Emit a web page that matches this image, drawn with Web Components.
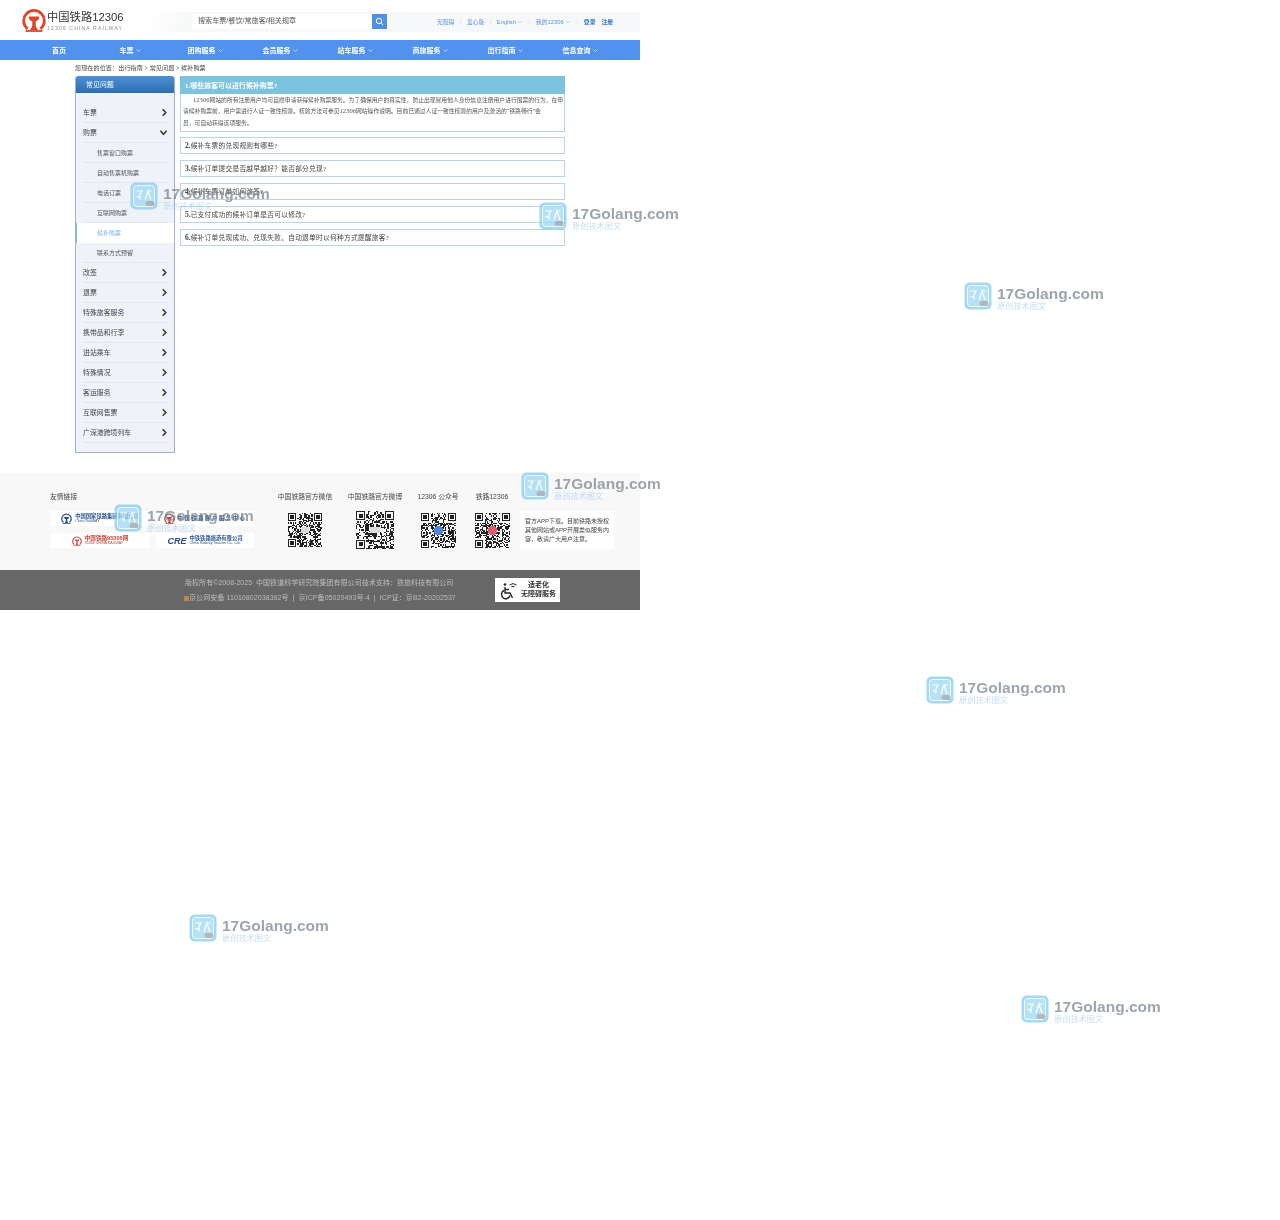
<!DOCTYPE html>
<html lang="zh-CN">
<head>
<meta charset="utf-8">
<title>候补购票 - 常见问题</title>
<style>
    html, body { margin: 0; padding: 0; background: #fff; }
    body { width: 1280px; height: 1220px; overflow: hidden; position: relative;
           font-family: "Liberation Sans", "Noto Sans CJK SC", sans-serif; }
    .page { width: 640px; filter: blur(.3px); }
</style>
</head>
<body>
<div class="page">
    <site-header></site-header>
    <site-nav></site-nav>
    <faq-page>
        <span slot="crumb">您现在的位置：出行指南 &gt; 常见问题 &gt; 候补购票</span>
        <faq-sidebar slot="side">
            <side-item>车票</side-item>
            <side-item open>购票</side-item>
            <side-item sub>售票窗口购票</side-item>
            <side-item sub>自动售票机购票</side-item>
            <side-item sub>电话订票</side-item>
            <side-item sub>互联网购票</side-item>
            <side-item sub active>候补购票</side-item>
            <side-item sub>联系方式预留</side-item>
            <side-item>改签</side-item>
            <side-item>退票</side-item>
            <side-item>特殊旅客服务</side-item>
            <side-item>携带品和行李</side-item>
            <side-item>进站乘车</side-item>
            <side-item>特殊情况</side-item>
            <side-item>客运服务</side-item>
            <side-item>互联网售票</side-item>
            <side-item>广深港跨境列车</side-item>
        </faq-sidebar>
        <faq-open slot="main" title-text="1.哪些旅客可以进行候补购票?"><span>12306</span>网站的所有注册用户均可自愿申请获得候补购票服务。为了确保用户的真实性，防止出现冒用他人身份信息注册用户进行囤票的行为，在申<br>请候补购票前，用户需进行人证一致性核验。核验方法可参见<span>12306</span>网站操作说明。目前已通过人证一致性核验的用户及激活的“铁路畅行”会<br>员，可自动获得该项服务。</faq-open>
        <faq-item slot="main"><b>2.</b>候补车票的兑现规则有哪些?</faq-item>
        <faq-item slot="main"><b>3.</b>候补订单提交是否越早越好？能否部分兑现?</faq-item>
        <faq-item slot="main"><b>4.</b>候补车票订单如何改签?</faq-item>
        <faq-item slot="main"><b>5.</b>已支付成功的候补订单是否可以修改?</faq-item>
        <faq-item slot="main"><b>6.</b>候补订单兑现成功、兑现失败、自动退单时以何种方式提醒旅客?</faq-item>
    </faq-page>
    <site-footer></site-footer>
</div>

<wm-mark x="130" y="182"></wm-mark>
<wm-mark x="539" y="202"></wm-mark>
<wm-mark x="964" y="282"></wm-mark>
<wm-mark x="521" y="472"></wm-mark>
<wm-mark x="114" y="504"></wm-mark>
<wm-mark x="926" y="676"></wm-mark>
<wm-mark x="189" y="914"></wm-mark>
<wm-mark x="1021" y="995"></wm-mark>

<script>
const CJK = '"Liberation Sans", "Noto Sans CJK SC", sans-serif';
const SERIF = '"Liberation Serif", "Noto Sans CJK SC", serif';

// chevron used all over the nav and the header links
function chev(size, color) {
    return `<svg width="${size}" height="${size}" viewBox="0 0 10 10" fill="none" stroke="${color}" stroke-width="1.2"><path d="M2 3.500 5 6.500 8 3.500"/></svg>`;
}

// the round red railway logo, open ring + rail head on flared feet
function railLogo(size, color) {
    return `<svg width="${size}" height="${size}" viewBox="0 0 24 24" fill="none">
        <path d="M5.600 20.800A10.300 10.300 0 1 1 18.400 20.800" stroke="${color}" stroke-width="2.800"/>
        <path d="M3.500 23h17" stroke="${color}" stroke-width="1.800"/>
        <path d="M6.800 8.500h10.400c.4 2.800-1.600 4.400-3.500 4.600v3.600c0 2 1 3.800 2.400 5.300H7.900c1.400-1.500 2.400-3.300 2.400-5.300v-3.600c-1.900-.2-3.900-1.800-3.500-4.600z" fill="${color}"/>
    </svg>`;
}

class SiteHeader extends HTMLElement {
    constructor() {
        super();
        this.attachShadow({ mode: 'open' });
        this.shadowRoot.innerHTML = `
        <style>
            :host { display: flex; align-items: center; height: 40px; box-sizing: border-box; padding-left: 22px; font-family: ${CJK}; }
            .logo { display: flex; align-items: center; gap: 1px; width: 128px; flex: none; }
            .logo > div { margin-top: 3px; }
            .logo b { display: block; font-weight: 400; font-size: 11.300px; line-height: 13px; color: #333; white-space: nowrap; }
            .logo i { display: block; font-style: normal; font-size: 5.200px; line-height: 8px; letter-spacing: 1.080px; color: #8a8a8a; white-space: nowrap; }
            .band { flex: 1; height: 20px; display: flex; align-items: center; padding-left: 42px; margin-top: 3px;
                    background: linear-gradient(105deg, rgba(247,248,249,0) 0, #f7f8f9 38px); }
            .search { width: 180px; height: 15px; box-sizing: border-box; background: #fff; color: #555; font-size: 7.100px; line-height: 15px; padding-left: 6px; white-space: nowrap; }
            .btn { width: 15px; height: 15px; background: #4f8fe8; display: flex; align-items: center; justify-content: center; }
            .links { display: flex; align-items: center; margin-left: 50px; font-size: 5.800px; color: #5b93d8; white-space: nowrap; }
            .links span { display: flex; align-items: center; }
            .links em { font-style: normal; color: #c8d4e2; margin: 0 5.500px; }
            .links b { color: #3b78c8; font-weight: 700; }
            .links b + b { margin-left: 6px; }
        </style>
        <div class="logo">
            ${railLogo(24, '#e0452a')}
            <div><b>中国铁路12306</b><i>12306 CHINA RAILWAY</i></div>
        </div>
        <div class="band">
            <div class="search">搜索车票/餐饮/常旅客/相关规章</div>
            <div class="btn"><svg width="9" height="9" viewBox="0 0 10 10" fill="none" stroke="#fff" stroke-width="1.100"><circle cx="4.400" cy="4.400" r="3"/><path d="M6.600 6.600 9 9"/></svg></div>
            <div class="links">
                <span>无障碍</span><em>|</em><span>爱心版</span><em>|</em>
                <span>English&nbsp;${chev(6, '#9dbde6')}</span><em>|</em>
                <span>我的12306&nbsp;${chev(6, '#9dbde6')}</span><em>|</em>
                <b>登录</b><b>注册</b>
            </div>
        </div>`;
    }
}

class SiteNav extends HTMLElement {
    constructor() {
        super();
        const names = ['首页', '车票', '团购服务', '会员服务', '站车服务', '商旅服务', '出行指南', '信息查询'];
        const cells = names.map((n, i) =>
            `<div class="cell">${n}${i ? chev(7, '#cfe0fa') : ''}</div>`).join('');
        this.attachShadow({ mode: 'open' });
        this.shadowRoot.innerHTML = `
        <style>
            :host { display: flex; height: 20px; background: #5192ee; padding-left: 20px; font-family: ${CJK}; }
            .cell { width: 75px; display: flex; align-items: center; justify-content: center; gap: 1px; color: #fff; font-size: 7px; font-weight: 700; white-space: nowrap; }
            .cell:nth-child(1), .cell:nth-child(2) { width: 73px; box-sizing: border-box; padding-left: 5px; }
        </style>${cells}`;
    }
}

class FaqPage extends HTMLElement {
    constructor() {
        super();
        this.attachShadow({ mode: 'open' });
        this.shadowRoot.innerHTML = `
        <style>
            :host { display: block; box-sizing: border-box; height: 413px; padding-left: 75px; font-family: ${SERIF}; }
            .crumb { height: 16px; line-height: 17px; font-size: 6.100px; letter-spacing: .080px; color: #444; white-space: nowrap; }
            .cols { display: flex; gap: 5px; align-items: flex-start; }
            .main { width: 385px; display: flex; flex-direction: column; gap: 6px; }
        </style>
        <div class="crumb"><slot name="crumb"></slot></div>
        <div class="cols">
            <slot name="side"></slot>
            <div class="main"><slot name="main"></slot></div>
        </div>`;
    }
}

class FaqSidebar extends HTMLElement {
    constructor() {
        super();
        this.attachShadow({ mode: 'open' });
        this.shadowRoot.innerHTML = `
        <style>
            :host { display: block; width: 100px; height: 377px; box-sizing: border-box; flex: none; background: #eff2f9; border: 1px solid #9fb1cc; border-top: 0; border-radius: 3px 3px 0 0; overflow: hidden; }
            .head { margin: 0 -1px; height: 17px; line-height: 17px; padding-left: 11px; color: #fff; font-size: 6.800px; letter-spacing: .200px;
                    background: linear-gradient(#4d90d4, #2b6fb2); border-radius: 3px 3px 0 0; }
            .list { padding-top: 9.500px; }
        </style>
        <div class="head">常见问题</div>
        <div class="list"><slot></slot></div>`;
    }
}

class SideItem extends HTMLElement {
    constructor() {
        super();
        this.attachShadow({ mode: 'open' });
        const sub = this.hasAttribute('sub');
        const open = this.hasAttribute('open');
        const arrow = open
            ? `<svg width="9" height="9" viewBox="0 0 10 10" fill="none" stroke="#333" stroke-width="1.600"><path d="M1.500 3 5 7 8.500 3"/></svg>`
            : `<svg width="7" height="9" viewBox="0 0 7 10" fill="none" stroke="#333" stroke-width="1.600"><path d="M1.500 1.500 5 5 1.500 8.500"/></svg>`;
        this.shadowRoot.innerHTML = `
        <style>
            :host { display: block; height: 20px; box-sizing: border-box; padding: 0 6px 0 7px; }
            :host([active]) { background: #fff; box-shadow: inset 2px 0 0 #70bcd8; margin-left: -1px; padding-left: 8px; margin-right: -1px; padding-right: 7px; }
            .row { display: flex; align-items: center; justify-content: space-between; height: 20px; box-sizing: border-box; border-bottom: 1px solid #e2e6ef; font-size: 6.900px; color: #444; white-space: nowrap; }
            :host([sub]) .row { padding-left: 14px; font-size: 6px; color: #555; }
            :host([active]) .row { border-bottom-color: transparent; color: #7fb4e4; }
        </style>
        <div class="row"><span><slot></slot></span>${sub ? '' : arrow}</div>`;
    }
}

class FaqOpen extends HTMLElement {
    constructor() {
        super();
        this.attachShadow({ mode: 'open' });
        this.shadowRoot.innerHTML = `
        <style>
            :host { display: block; box-sizing: border-box; height: 56px; margin-bottom: -1px; border: 1px solid #b8d5e2; border-top: 0; font-family: ${SERIF}; }
            .t { margin: 0 -1px; height: 18px; line-height: 19px; padding-left: 5px; background: #7cc3e0; color: #fff; font-size: 6.900px; font-weight: 700; letter-spacing: .060px; white-space: nowrap; }
            .b { margin: 0; padding: 1px 0 0 2px; font-size: 5.800px; line-height: 11.300px; color: #555; text-indent: 10px; white-space: nowrap; }
            ::slotted(span) { font-size: 6.600px; line-height: 1; }
        </style>
        <div class="t">${this.getAttribute('title-text')}</div>
        <p class="b"><slot></slot></p>`;
    }
}

class FaqItem extends HTMLElement {
    constructor() {
        super();
        this.attachShadow({ mode: 'open' });
        this.shadowRoot.innerHTML = `
        <style>
            :host { display: block; box-sizing: border-box; height: 17px; line-height: 16px; border: 1px solid #b8d5e2; padding-left: 4px; font-family: ${SERIF}; font-size: 6.700px; letter-spacing: .280px; color: #444; white-space: nowrap; }
            ::slotted(b) { font-size: 7.500px; letter-spacing: 0; }
        </style>
        <slot></slot>`;
    }
}

// pseudo QR code: three finder squares and seeded noise for the modules
class QrCode extends HTMLElement {
    constructor() {
        super();
        const n = 29, size = this.getAttribute('size') || 34;
        let seed = Number(this.getAttribute('seed')) || 7;
        const rnd = () => (seed = (seed * 16807) % 2147483647) / 2147483647;
        const finder = (x, y) => (x >= 0 && x < 7 && y >= 0 && y < 7)
            ? (x == 0 || x == 6 || y == 0 || y == 6 || (x > 1 && x < 5 && y > 1 && y < 5)) : null;
        let rects = '';
        for (let y = 0; y < n; y++) {
            for (let x = 0; x < n; x++) {
                let f = finder(x, y);
                if (f === null) f = finder(x - n + 7, y);
                if (f === null) f = finder(x, y - n + 7);
                const zone = (x < 8 && y < 8) || (x > n - 9 && y < 8) || (x < 8 && y > n - 9);
                const on = f === null ? (!zone && rnd() > .5) : f;
                if (on) rects += `<rect x="${x}" y="${y}" width="1" height="1"/>`;
            }
        }
        const tint = this.getAttribute('tint');
        const mid = tint ? `<rect x="11" y="11" width="7" height="7" rx="2" fill="${tint}"/>`
                         : `<rect x="11" y="12" width="7" height="5" fill="#ddd"/>`;
        this.attachShadow({ mode: 'open' });
        this.shadowRoot.innerHTML = `
        <style>:host { display: block; line-height: 0; }</style>
        <svg width="${size}" height="${size}" viewBox="0 0 ${n} ${n}" shape-rendering="crispEdges" fill="#222">${rects}${mid}</svg>`;
    }
}

class SiteFooter extends HTMLElement {
    constructor() {
        super();
        this.attachShadow({ mode: 'open' });
        this.shadowRoot.innerHTML = `
        <style>
            :host { display: block; font-family: ${CJK}; }
            .top { height: 97px; box-sizing: border-box; background: #f8f8f8; padding: 19px 0 0 50px; display: flex; }
            .friends { width: 227px; flex: none; }
            .lbl { font-size: 6.800px; line-height: 10px; color: #444; white-space: nowrap; }
            .logos { display: grid; grid-template-columns: 98px 98px; gap: 7px 7px; margin: 9px 0 0 1px; }
            .lg { height: 15px; background: #fff; display: flex; align-items: center; justify-content: center; gap: 3px; white-space: nowrap; }
            .lg div { font-size: 5.300px; line-height: 5px; font-weight: 700; color: #27508f; }
            .lg small { display: block; font-size: 3.600px; line-height: 4px; font-weight: 400; }
            .lg .r { color: #c9443a; font-size: 5.600px; }
            .lg .w { letter-spacing: 1.600px; }
            .cre { font-style: italic; font-weight: 700; font-size: 9px; color: #244a8f; }
            .qrs { display: flex; }
            .qc { display: flex; flex-direction: column; align-items: center; white-space: nowrap; }
            .qc .pic { height: 38px; margin-top: 9px; display: flex; align-items: center; }
            .note { width: 94px; height: 38px; margin: 19px 0 0 11px; box-sizing: border-box; background: #fff; padding: 6px 0 0 5px; font-size: 6px; line-height: 9px; color: #444; white-space: nowrap; }
            .bot { height: 40px; background: #676767; display: flex; box-sizing: border-box; padding: 5px 0 0 184px; }
            .cp { width: 311px; flex: none; font-size: 7.050px; line-height: 15px; color: #bdbdbd; white-space: nowrap; }
            .cp div:first-child { padding-left: 1px; }
            .cp div + div { letter-spacing: .050px; }
            .cp u { display: inline-block; width: 5px; height: 5px; background: #c9853a; border-radius: 1px; vertical-align: -.500px; }
            .bdg { width: 65px; height: 24px; margin-top: 3px; background: #fff; display: flex; align-items: center; gap: 3px; padding-left: 6px; box-sizing: border-box; }
            .bdg div { font-family: ${SERIF}; font-size: 7px; line-height: 9px; font-weight: 700; color: #333; text-align: center; white-space: nowrap; }
        </style>
        <div class="top">
            <div class="friends">
                <div class="lbl">友情链接</div>
                <div class="logos">
                    <div class="lg">${railLogo(11, '#27508f')}<div>中国国家铁路集团有限公司<small>China RailWAY</small></div></div>
                    <div class="lg">${railLogo(11, '#c9443a')}<div class="w">中国铁路客户服务中心</div></div>
                    <div class="lg">${railLogo(10, '#d9534a')}<div class="r">中国铁路95306网<small>95306 CHINA RAILWAY</small></div></div>
                    <div class="lg"><span class="cre">CRE</span><div>中铁铁路旅游有限公司<small>China Railway Tourism Co., Ltd.</small></div></div>
                </div>
            </div>
            <div class="qrs">
                <div class="qc" style="width:56px"><div class="lbl">中国铁路官方微信</div><div class="pic"><qr-code seed="11" size="34"></qr-code></div></div>
                <div class="qc" style="width:56px;margin-left:14px"><div class="lbl">中国铁路官方微博</div><div class="pic"><qr-code seed="29" size="38"></qr-code></div></div>
                <div class="qc" style="width:42px;margin-left:14px"><div class="lbl">12306 公众号</div><div class="pic"><qr-code seed="53" size="35" tint="#4f86d8"></qr-code></div></div>
                <div class="qc" style="width:34px;margin-left:16px"><div class="lbl">铁路12306</div><div class="pic"><qr-code seed="97" size="35" tint="#d8606a"></qr-code></div></div>
                <div class="note">官方APP下载。目前铁路未授权<br>其他网站或APP开展类似服务内<br>容，敬请广大用户注意。</div>
            </div>
        </div>
        <div class="bot">
            <div class="cp">
                <div>版权所有©2008-2025&nbsp;&nbsp;中国铁道科学研究院集团有限公司技术支持：铁旅科技有限公司</div>
                <div><u></u>京公网安备 11010802038392号&nbsp;&nbsp;|&nbsp;&nbsp;京ICP备05020493号-4&nbsp;&nbsp;|&nbsp;&nbsp;ICP证：京B2-20202537</div>
            </div>
            <div class="bdg">
                <svg width="17" height="19" viewBox="0 0 17 19" fill="none" stroke="#222" stroke-width="1.400">
                    <circle cx="4" cy="3.500" r="1.300" fill="#222" stroke="none"/>
                    <path d="M4 6v6h5l2.500 5"/><path d="M3 9.500a4.300 4.300 0 1 0 6 5"/>
                    <path d="M4 8.500h4"/>
                    <path d="M8.500 4a5.500 5.500 0 0 1 7 0M10.300 5.800a3 3 0 0 1 3.400 0" stroke-width="1"/>
                </svg>
                <div>适老化<br>无障碍服务</div>
            </div>
        </div>`;
    }
}

// repeated site watermark, these sit on a free canvas over the page
class WmMark extends HTMLElement {
    constructor() {
        super();
        this.attachShadow({ mode: 'open' });
        this.shadowRoot.innerHTML = `
        <style>
            :host { position: absolute; display: flex; gap: 5px; pointer-events: none; filter: blur(.3px); }
            svg { flex: none; opacity: .75; }
            .a { font-family: "Liberation Sans", sans-serif; font-size: 15.500px; line-height: 18px; font-weight: 700; color: rgba(110,122,132,.68); white-space: nowrap; margin-top: 2.500px; }
            .b { font-family: "Noto Sans CJK SC", sans-serif; font-size: 8.200px; line-height: 9px; color: rgba(150,195,240,.55); white-space: nowrap; margin-top: -1.500px; }
        </style>
        <svg width="28" height="28" viewBox="0 0 28 28" fill="none">
            <rect x=".5" y=".5" width="27" height="27" rx="5" fill="#86cdf1"/>
            <rect x="3.500" y="3.500" width="21" height="21" rx="3" fill="#9ed9f5" stroke="#eefaff" stroke-width="1"/>
            <path d="M6.500 9h5.500l-2 3.500v5M6.500 14l3 1.500M21 18l-3-9-3 9M18 9h3.500" stroke="#fff" stroke-width="1.200"/>
            <rect x="15.500" y="19" width="9" height="5" rx="2.500" fill="#9a9fa3"/>
        </svg>
        <div><div class="a">17Golang.com</div><div class="b">原创技术图文</div></div>`;
        this.style.left = this.getAttribute('x') + 'px';
        this.style.top = this.getAttribute('y') + 'px';
    }
}

customElements.define('qr-code', QrCode);
customElements.define('site-header', SiteHeader);
customElements.define('site-nav', SiteNav);
customElements.define('faq-page', FaqPage);
customElements.define('faq-sidebar', FaqSidebar);
customElements.define('side-item', SideItem);
customElements.define('faq-open', FaqOpen);
customElements.define('faq-item', FaqItem);
customElements.define('site-footer', SiteFooter);
customElements.define('wm-mark', WmMark);
</script>
</body>
</html>
